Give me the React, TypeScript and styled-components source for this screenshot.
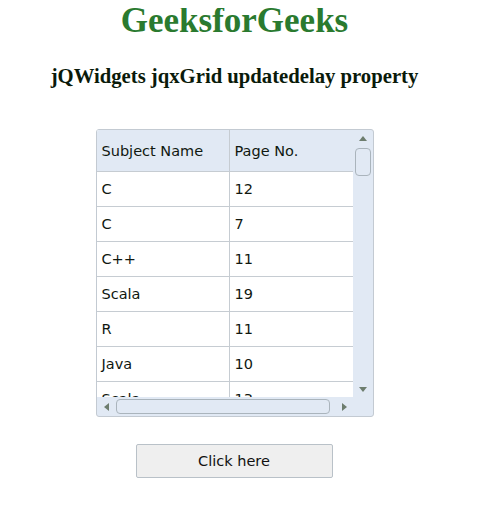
import React from "react";
import styled, { createGlobalStyle } from "styled-components";

const Global = createGlobalStyle`
  body {
    margin: 8px;
    background: #ffffff;
    font-family: "Liberation Serif", "Times New Roman", serif;
  }
`;

const Page = styled.div`
  width: 453px;
  display: flex;
  flex-direction: column;
  align-items: center;
`;

const Title = styled.h1`
  margin: 0;
  font-size: 35px;
  line-height: 26px;
  color: #2a7a2f;
  font-weight: bold;
`;

const Subtitle = styled.h3`
  margin: 30px 0 0;
  font-size: 20.7px;
  line-height: 24px;
  color: #0a1a0a;
  font-weight: bold;
`;

const Grid = styled.div`
  margin-top: 41px;
  width: 276px;
  height: 286px;
  border: 1px solid #c3cad2;
  border-radius: 3px;
  overflow: hidden;
  display: grid;
  grid-template-columns: 1fr 20px;
  grid-template-rows: 1fr 19px;
  background: #e1e9f4;
  font-family: "DejaVu Sans", Verdana, sans-serif;
  font-size: 14.5px;
  color: #101810;
`;

const Body = styled.div`
  overflow: hidden;
  background: #ffffff;
  display: flex;
  flex-direction: column;
`;

const Row = styled.div<{ $header?: boolean }>`
  flex: none;
  display: grid;
  grid-template-columns: 133px 1fr;
  height: ${(p) => (p.$header ? 42 : 35)}px;
  background: ${(p) => (p.$header ? "#e1e9f4" : "#ffffff")};
  border-bottom: 1px solid #c6ccd2;
  box-sizing: border-box;
`;

const Cell = styled.div`
  display: flex;
  align-items: center;
  padding-left: 5px;
  border-right: 1px solid #c6ccd2;
  white-space: nowrap;
  &:last-child {
    border-right: none;
  }
`;

const VScroll = styled.div`
  grid-row: 1 / 2;
  grid-column: 2 / 3;
  display: flex;
  flex-direction: column;
  align-items: center;
  padding: 6px 0 5px;
  box-sizing: border-box;
`;

const HScroll = styled.div`
  grid-row: 2 / 3;
  grid-column: 1 / 2;
  display: flex;
  align-items: center;
  padding: 0 6px 0 7px;
  box-sizing: border-box;
`;

const Corner = styled.div`
  grid-row: 2 / 3;
  grid-column: 2 / 3;
`;

const VThumb = styled.div`
  margin-top: 7px;
  width: 16px;
  height: 28px;
  border: 1px solid #aab4bc;
  border-radius: 4px;
  background: #e1e9f4;
  box-sizing: border-box;
`;

const HThumb = styled.div`
  margin-left: 7px;
  width: 214px;
  height: 15px;
  border: 1px solid #aab4bc;
  border-radius: 4px;
  background: #e1e9f4;
  box-sizing: border-box;
`;

const Spacer = styled.div`
  flex: 1;
`;

const Arrow = ({ dir }: { dir: "up" | "down" | "left" | "right" }) => {
  const pts = {
    up: "0,5 4,0 8,5",
    down: "0,0 8,0 4,5",
    left: "5,0 5,8 0,4",
    right: "0,0 0,8 5,4",
  }[dir];
  const vertical = dir === "up" || dir === "down";
  return (
    <svg width={vertical ? 8 : 5} height={vertical ? 5 : 8} viewBox={vertical ? "0 0 8 5" : "0 0 5 8"}>
      <polygon points={pts} fill="#6d7d6e" />
    </svg>
  );
};

const Button = styled.button`
  margin-top: 27px;
  width: 197px;
  height: 34px;
  border: 1px solid #b9c1c8;
  border-radius: 2px;
  background: #efefef;
  font-family: "DejaVu Sans", Verdana, sans-serif;
  font-size: 14.5px;
  color: #111;
  padding: 0;
  margin-left: -1px;
`;

const rows = [
  ["C", "12"],
  ["C", "7"],
  ["C++", "11"],
  ["Scala", "19"],
  ["R", "11"],
  ["Java", "10"],
  ["Scala", "13"],
];

export default function App() {
  return (
    <>
      <Global />
      <Page>
        <Title>GeeksforGeeks</Title>
        <Subtitle>jQWidgets jqxGrid updatedelay property</Subtitle>
        <Grid>
          <Body>
            <Row $header>
              <Cell>Subject Name</Cell>
              <Cell>Page No.</Cell>
            </Row>
            {rows.map((r, i) => (
              <Row key={i}>
                <Cell>{r[0]}</Cell>
                <Cell>{r[1]}</Cell>
              </Row>
            ))}
          </Body>
          <VScroll>
            <Arrow dir="up" />
            <VThumb />
            <Spacer />
            <Arrow dir="down" />
          </VScroll>
          <HScroll>
            <Arrow dir="left" />
            <HThumb />
            <Spacer />
            <Arrow dir="right" />
          </HScroll>
          <Corner />
        </Grid>
        <Button>Click here</Button>
      </Page>
    </>
  );
}
